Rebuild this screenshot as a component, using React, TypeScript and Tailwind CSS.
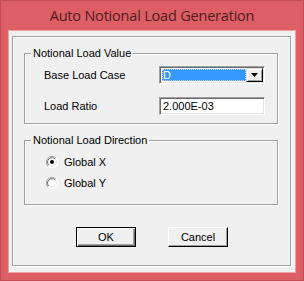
const sans = "font-['Liberation_Sans',Arial,sans-serif]";

const Radio = ({ checked }: { checked?: boolean }) => (
  <svg width="12" height="12" viewBox="0 0 12 12" className="shrink-0">
    <circle cx="6" cy="6" r="5.5" fill="#ffffff" />
    <path d="M10 2.2 A5.5 5.5 0 0 0 1.8 10" fill="none" stroke="#a0a0a0" strokeWidth="1" />
    <path d="M9 3 A4.3 4.3 0 0 0 2.8 9.2" fill="none" stroke="#696969" strokeWidth="1" />
    <path d="M10.2 2 A5.5 5.5 0 0 1 2 10.2" fill="none" stroke="#ffffff" strokeWidth="1" />
    <path d="M9.2 2.8 A4.3 4.3 0 0 1 3 9" fill="none" stroke="#e3e3e3" strokeWidth="1" />
    {checked && <circle cx="6" cy="6" r="2" fill="#000000" />}
  </svg>
);

const GroupBox = ({
  title,
  className,
  children,
}: {
  title: string;
  className?: string;
  children: React.ReactNode;
}) => (
  <fieldset
    className={`border border-[#a0a0a0] shadow-[inset_1px_1px_0_#ffffff,1px_1px_0_#ffffff] ${className ?? ""}`}
  >
    <legend className="ml-[6px] px-[2px] bg-[#f0f0f0] leading-[13px] text-[11px] text-black">
      {title}
    </legend>
    {children}
  </fieldset>
);

const Button = ({ label, primary }: { label: string; primary?: boolean }) => (
  <button
    className={`w-[60px] h-[20px] bg-[#f0f0f0] text-[11px] text-black leading-none ${
      primary
        ? "border border-black shadow-[inset_1px_1px_0_#ffffff,inset_-1px_-1px_0_#696969,inset_-2px_-2px_0_#a0a0a0]"
        : "border border-t-white border-l-white border-b-black border-r-black shadow-[inset_-1px_-1px_0_#a0a0a0]"
    }`}
  >
    {label}
  </button>
);

export default function App() {
  return (
    <div className={`w-[304px] h-[281px] bg-[#dd5e64] border border-[#c44d53] flex flex-col ${sans}`}>
      {/* title bar */}
      <div className="h-[29px] flex items-center justify-center pt-[1px]">
        <span className="font-['Open_Sans',sans-serif] text-[14.5px] text-[#521c1f] tracking-[-0.2px]">
          Auto Notional Load Generation
        </span>
      </div>

      {/* client area */}
      <div className="mx-[7px] mb-[7px] flex-1 bg-[#f0f0f0] border border-[#e9a3a6] pl-[3px] pr-[4px] pt-[5px] pb-[6px]">
        <div className="h-full border border-[#a0a0a0] shadow-[inset_1px_1px_0_#ffffff,1px_1px_0_#ffffff] pt-[10px] pl-[11px] pr-[12px]">
          <GroupBox title="Notional Load Value" className="h-[77px]">
            <div className="pl-[19px] pr-[12px] pt-[6px] grid grid-cols-[115px_1fr] items-center gap-y-[13px] text-[11px] text-black">
              <span>Base Load Case</span>
              <div className="h-[18px] flex bg-white border border-t-[#a0a0a0] border-l-[#a0a0a0] border-b-white border-r-white shadow-[inset_1px_1px_0_#696969,inset_-1px_-1px_0_#e3e3e3]">
                <div className="flex-1 m-[2px] mr-0 bg-[#3399ff] outline-1 outline-dotted outline-[#d0d0d0] -outline-offset-1 text-white flex items-center pl-[1px]">
                  D
                </div>
                <div className="w-[17px] my-[1px] mr-[1px] bg-[#f0f0f0] border border-t-[#e3e3e3] border-l-[#e3e3e3] border-b-black border-r-black shadow-[inset_1px_1px_0_#ffffff,inset_-1px_-1px_0_#a0a0a0] flex items-center justify-center">
                  <svg width="7" height="4" viewBox="0 0 7 4">
                    <path d="M0 0 H7 L3.5 4 Z" fill="#000000" />
                  </svg>
                </div>
              </div>
              <span>Load Ratio</span>
              <div className="h-[18px] bg-white border border-t-[#a0a0a0] border-l-[#a0a0a0] border-b-white border-r-white shadow-[inset_1px_1px_0_#696969,inset_-1px_-1px_0_#e3e3e3] flex items-center pl-[3px]">
                2.000E-03
              </div>
            </div>
          </GroupBox>

          <GroupBox title="Notional Load Direction" className="mt-[10px] h-[71px]">
            <div className="pl-[21px] pt-[9px] flex flex-col gap-[9px] text-[11px] text-black">
              <label className="flex items-center gap-[6px] leading-[12px]">
                <Radio checked />
                Global X
              </label>
              <label className="flex items-center gap-[6px] leading-[12px]">
                <Radio />
                Global Y
              </label>
            </div>
          </GroupBox>

          <div className="mt-[22px] flex justify-center gap-[32px] pl-[2px]">
            <Button label="OK" primary />
            <Button label="Cancel" />
          </div>
        </div>
      </div>
    </div>
  );
}
